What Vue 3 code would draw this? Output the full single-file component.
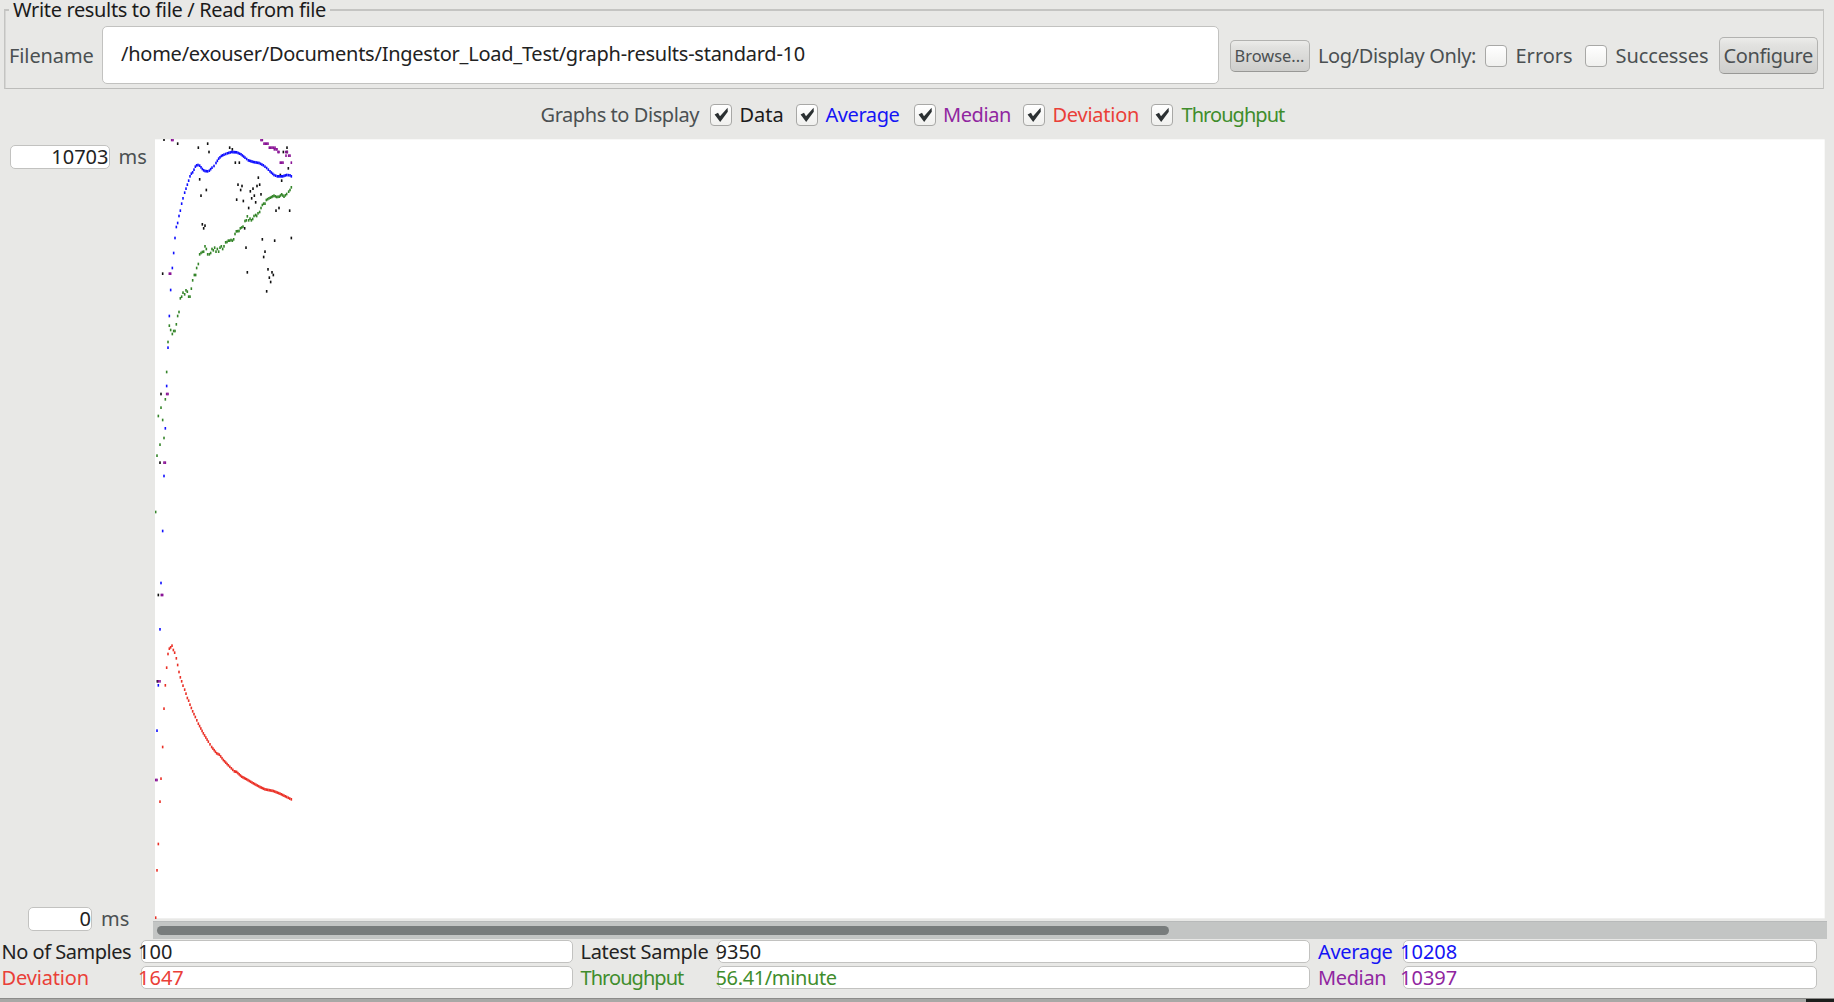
<script setup>
const GRAPHS = [
  { label: 'Data', color: '#1b1b1b', text: 8, ls: 0, width: 86 },
  { label: 'Average', color: '#1414f5', text: 8, ls: -0.43, width: 118 },
  { label: 'Median', color: '#9026a0', text: 7.5, ls: -0.42, width: 109.5 },
  { label: 'Deviation', color: '#ea4038', text: 7.5, ls: -0.25, width: 128 },
  { label: 'Throughput', color: '#3f8d2c', text: 8.5, ls: -0.95, width: 140 },
]

// Plot coordinates are in thirds of a pixel; samples are one STEP apart.
const STEP = 4.11

function curve(points) {
  const out = []
  for (let i = 0; i < points.length - 1; i++) {
    const [x0, y0] = points[i]
    const [x1, y1] = points[i + 1]
    const n = Math.max(1, Math.round((x1 - x0) / STEP))
    for (let k = 0; k < n; k++) {
      out.push([x0 + ((x1 - x0) * k) / n, y0 + ((y1 - y0) * k) / n])
    }
  }
  out.push(points[points.length - 1])
  return out
}

const series = [
  {
    color: '#111',
    dots: [
      [72, 29], [113, 41], [175, 53], [203, 41], [207, 66], [269, 53], [277, 58], [286, 98], [298, 98],
      [179, 148], [199, 180], [183, 197], [294, 164], [306, 168], [302, 180], [290, 209], [310, 213],
      [355, 143], [351, 168], [359, 164], [339, 176], [331, 184], [363, 193], [343, 197], [335, 205],
      [347, 217], [326, 234], [187, 283], [195, 287], [191, 295], [314, 295], [441, 53], [430, 66],
      [441, 66], [445, 115], [421, 135], [425, 152], [417, 234], [408, 242], [449, 242], [454, 324],
      [367, 328], [404, 332], [318, 353], [375, 365], [371, 381], [322, 427], [384, 418], [396, 427],
      [400, 435], [388, 443], [392, 456], [380, 484], [68, 431], [63, 792], [60, 998], [55, 1395],
      [52, 1654],
    ],
  },
  {
    color: '#8a1496',
    dots: [
      [95, 30], [99, 30], [363, 30], [367, 30], [372, 41], [376, 41], [380, 41], [384, 41], [388, 53],
      [392, 53], [396, 53], [400, 53], [405, 53], [403, 58], [408, 58], [411, 58], [414, 66], [417, 66],
      [421, 98], [425, 98], [429, 98], [437, 66], [442, 66], [438, 77], [446, 77], [450, 77], [454, 98],
      [88, 431], [92, 431], [80, 792], [84, 792], [72, 998], [76, 998], [64, 1395], [68, 1395],
      [55, 1654], [60, 1654], [47, 1950], [51, 1950],
    ],
  },
  {
    color: '#35852a',
    dots: [
      [47, 1146], [51, 977], [55, 858], [60, 944], [63, 833], [68, 870], [72, 924], [76, 808], [80, 726],
      [84, 636], [88, 587], [92, 600], [97, 612], [101, 603], [105, 603], [109, 583], [113, 558],
      [117, 546], [121, 505], [125, 500], [129, 488], [134, 493], [138, 481], [142, 485], [146, 500],
      [150, 500], [154, 476], [158, 451], [163, 435], [167, 435], [170, 414], [175, 402],
      ...curve([
        [179, 373], [183, 369], [187, 366], [191, 365], [195, 349], [199, 357], [203, 373], [208, 373],
        [212, 369], [216, 357], [220, 361], [224, 353], [228, 365], [232, 357], [236, 365], [240, 353],
        [244, 349], [248, 357], [252, 349], [257, 337], [261, 336], [265, 332], [269, 332], [273, 330],
        [277, 332], [281, 328], [285, 312], [289, 304], [297, 303], [301, 295], [309, 290], [315, 273],
        [319, 271], [322, 259], [326, 271], [330, 266], [334, 271], [338, 267], [342, 258], [347, 255],
        [350, 258], [354, 250], [359, 246], [363, 234], [367, 225], [371, 221], [375, 221], [379, 210],
        [387, 205], [395, 201], [402, 197], [410, 201], [418, 200], [425, 193], [432, 200], [440, 192],
        [446, 185], [450, 180], [454, 172],
      ]),
    ],
  },
  {
    color: '#1010ff',
    dots: [
      [51, 1802], [55, 1666], [60, 1498], [63, 1359], [68, 1203], [72, 1038], [76, 895], [80, 768],
      [84, 653], [88, 558], [92, 480], [97, 414], [101, 369], [105, 324],
      ...curve([
        [109, 291], [113, 279], [117, 258], [121, 242], [125, 221], [129, 205], [134, 188], [138, 176],
        [142, 164], [146, 152], [150, 139], [154, 131], [158, 127], [162, 119], [166, 110], [170, 106],
        [174, 105], [179, 107], [183, 112], [187, 117], [191, 121], [195, 123], [203, 124], [208, 122],
        [216, 113], [222, 108], [228, 99], [236, 86], [244, 78], [252, 74], [262, 70], [275, 66],
        [290, 67], [303, 73], [315, 83], [325, 91], [340, 96], [357, 99], [370, 106], [380, 114],
        [390, 124], [402, 135], [412, 139], [428, 139], [440, 135], [450, 136], [454, 139],
      ]),
    ],
  },
  {
    color: '#ea3026',
    dots: [
      [47, 2363], [51, 2221], [55, 2142], [60, 2015], [63, 1946], [68, 1851], [72, 1736], [76, 1666],
      [80, 1613], [84, 1572], [88, 1556], [92, 1552], [96, 1547], [100, 1560], [104, 1568], [109, 1585],
      ...curve([
        [113, 1605], [117, 1626], [121, 1642], [125, 1654], [129, 1667], [134, 1679], [138, 1691],
        [142, 1704], [146, 1712], [150, 1724], [158, 1744], [166, 1761], [175, 1781], [190, 1810],
        [205, 1835], [215, 1851], [230, 1870], [238, 1874], [250, 1890], [265, 1906], [283, 1924],
        [290, 1926], [305, 1940], [320, 1948], [340, 1960], [360, 1971], [375, 1978], [400, 1983],
        [420, 1991], [440, 2001], [454, 2008],
      ]),
    ],
  },
]

const stats = [
  { label: 'No of Samples', value: '100', color: '#222', ls: -0.48, vls: 0 },
  { label: 'Latest Sample', value: '9350', color: '#222', ls: -0.3, vls: 0 },
  { label: 'Average', value: '10208', color: '#1414f5', ls: -0.33, vls: 0 },
  { label: 'Deviation', value: '1647', color: '#ea4038', ls: -0.15, vls: 0 },
  { label: 'Throughput', value: '56.41/minute', color: '#3f8d2c', ls: -0.95, vls: -0.37 },
  { label: 'Median', value: '10397', color: '#9026a0', ls: -0.37, vls: 0 },
]
</script>

<template>
  <div class="app">
    <section class="file-panel">
      <div class="legend">
        <span class="rule short"></span>
        <span class="title">Write results to file / Read from file</span>
        <span class="rule"></span>
      </div>
      <div class="file-row">
        <span class="filename-label">Filename</span>
        <div class="path">/home/exouser/Documents/Ingestor_Load_Test/graph-results-standard-10</div>
        <button class="btn browse">Browse...</button>
        <span class="only">Log/Display Only:</span>
        <i class="check"></i>
        <span class="errors">Errors</span>
        <i class="check"></i>
        <span class="successes">Successes</span>
        <button class="btn configure">Configure</button>
      </div>
    </section>

    <section class="graph-row">
      <span class="graphs-label">Graphs to Display</span>
      <div v-for="g in GRAPHS" :key="g.label" class="toggle" :style="{ width: g.width + 'px' }">
        <i class="check">
          <svg viewBox="0 0 22 22" width="22" height="22">
            <path d="M4.6 10.4 L8 8.8 L10 12.2 L17.6 3.8 L17.8 7.8 L10.2 18 Z" fill="#2b3032" />
          </svg>
        </i>
        <span :style="{ color: g.color, marginLeft: g.text + 'px', letterSpacing: g.ls + 'px' }">{{ g.label }}</span>
      </div>
    </section>

    <section class="plot-row">
      <div class="axis">
        <div class="axis-line"><div class="field max">10703</div><span>ms</span></div>
        <div class="axis-line bottom"><div class="field min">0</div><span>ms</span></div>
      </div>
      <div class="plot">
        <svg class="canvas" viewBox="45 27 5008.5 2340" width="1669.5" height="780">
          <rect x="45" y="28" width="5009" height="2337" fill="#fff" />
          <g v-for="s in series" :key="s.color" :fill="s.color">
            <rect v-for="(d, i) in s.dots" :key="i" :x="d[0] - 2.4" :y="d[1] - 4" width="4.8" height="8" />
          </g>
        </svg>
        <div class="track"><div class="thumb"></div></div>
      </div>
    </section>

    <section class="stats">
      <template v-for="s in stats" :key="s.label">
        <span class="stat-label" :style="{ color: s.color, letterSpacing: s.ls + 'px' }">{{ s.label }}</span>
        <div class="stat-field">
          <span :style="{ color: s.color, letterSpacing: s.vls + 'px' }">{{ s.value }}</span>
        </div>
      </template>
    </section>

    <footer class="edge"><div class="corner"></div></footer>
  </div>
</template>

<style>
html,
body {
  margin: 0;
  background: #e8e8e6;
  overflow: hidden;
}
</style>

<style scoped>
.app {
  box-sizing: border-box;
  width: 1834px;
  height: 1002px;
  display: flex;
  flex-direction: column;
  overflow: hidden;
  background: #e8e8e6;
  color: #4b5052;
  font-family: "Noto Sans", "Open Sans", sans-serif;
  font-size: 20px;
  line-height: 24px;
  white-space: nowrap;
}
.app > * {
  flex: none;
}
.file-panel {
  box-sizing: border-box;
  width: 1820px;
  height: 89px;
  margin-left: 4px;
  background:
    linear-gradient(#c4c4c2, #c4c4c2) left 10px / 1.5px 79px no-repeat,
    linear-gradient(#c4c4c2, #c4c4c2) right 10px / 1.5px 79px no-repeat,
    linear-gradient(#bcbcba, #bcbcba) left bottom / 100% 1.5px no-repeat;
}
.legend {
  display: flex;
  align-items: center;
  height: 20px;
}
.rule {
  flex: 1;
  height: 1.5px;
  background: #c4c4c2;
  margin-left: 4px;
}
.rule.short {
  flex: none;
  width: 5px;
  margin-left: 0;
}
.title {
  margin-left: 4px;
  color: #1b1b1b;
  letter-spacing: -0.35px;
  line-height: 20px;
}
.file-row {
  display: flex;
  align-items: center;
  height: 69px;
}
.filename-label {
  width: 94px;
  margin-left: 5px;
  letter-spacing: -0.1px;
  padding-top: 3px;
}
.path {
  box-sizing: border-box;
  width: 1117px;
  height: 58px;
  border: 1.5px solid #c2c2c0;
  border-radius: 5px;
  background: #fff;
  color: #222;
  line-height: 54px;
  padding-left: 18px;
  letter-spacing: -0.25px;
  flex: none;
  margin-left: -1px;
}
.btn {
  box-sizing: border-box;
  flex: none;
  padding: 0;
  border: 1.5px solid #b2b2b0;
  border-bottom-color: #989896;
  border-radius: 5px;
  background: linear-gradient(#ececea, #e2e2e0 20%, #cececc);
  color: #4b5052;
  font-family: inherit;
  text-align: center;
}
.browse {
  width: 80px;
  height: 32px;
  margin-left: 10.5px;
  margin-top: 2px;
  font-size: 16.4px;
  line-height: 29px;
}
.only {
  width: 167px;
  margin-left: 8.5px;
  letter-spacing: -0.38px;
  padding-top: 3px;
  flex: none;
}
.check {
  box-sizing: border-box;
  flex: none;
  width: 22px;
  height: 22px;
  border: 1.5px solid #a8a8a6;
  border-radius: 4px;
  background: linear-gradient(#fff, #f0f0ee);
  display: block;
}
.file-row .check {
  margin-top: 3px;
}
.check svg {
  display: block;
  margin: -1px;
}
.errors,
.successes {
  padding-top: 3px;
  flex: none;
  margin-left: 8.5px;
}
.errors {
  width: 69.5px;
}
.successes {
  width: 103px;
  letter-spacing: -0.1px;
}
.configure {
  width: 99.5px;
  height: 37px;
  margin-top: 2px;
  font-size: 20px;
  line-height: 32px;
  letter-spacing: -0.4px;
}
.graph-row {
  display: flex;
  align-items: center;
  height: 50px;
  padding: 2px 0 0 540.5px;
  box-sizing: border-box;
}
.graphs-label {
  width: 169px;
  letter-spacing: -0.43px;
}
.toggle {
  display: flex;
  align-items: center;
  flex: none;
}
.plot-row {
  display: flex;
  height: 800px;
}
.axis {
  width: 152.5px;
  display: flex;
  flex-direction: column;
  justify-content: space-between;
  box-sizing: border-box;
  padding: 6px 0 8px;
}
.axis-line {
  display: flex;
  align-items: center;
  gap: 9px;
  padding-left: 10px;
}
.axis-line.bottom {
  padding-left: 27.5px;
}
.field {
  box-sizing: border-box;
  height: 24px;
  border: 1.5px solid #c2c2c0;
  border-radius: 5px;
  background: #fff;
  color: #222;
  text-align: right;
  line-height: 21px;
}
.max {
  width: 99.5px;
}
.min {
  width: 64.5px;
}
.plot {
  width: 1674.5px;
}
.canvas {
  display: block;
  margin: 0 0 2px 2.5px;
}
.track {
  height: 18px;
  background: #c3c5c4;
  box-sizing: border-box;
  padding: 4px 0 0 4px;
  border-top: 1px solid #b8baba;
}
.thumb {
  width: 1012.5px;
  height: 8.5px;
  border-radius: 4.5px;
  background: #787c7c;
}
.stats {
  display: grid;
  grid-template-columns: 139px 432px 145.5px 592px 92.5px 414px;
  grid-auto-rows: 23px;
  row-gap: 3px;
  padding: 1px 0 0 1.5px;
  height: 59px;
  box-sizing: border-box;
}
.stat-label {
  line-height: 24px;
  padding-left: 8px;
}
.stat-label:nth-child(6n + 1) {
  padding-left: 0;
}
.stat-field {
  box-sizing: border-box;
  border: 1.5px solid #c2c2c0;
  border-radius: 5px;
  background: #fff;
  line-height: 22px;
}
.stat-field span {
  margin-left: -3.5px;
}
.edge {
  box-sizing: border-box;
  height: 4px;
  border-top: 1px solid #8c8c8a;
  background: #a8a8a6;
  display: flex;
  justify-content: flex-end;
}
.corner {
  width: 28px;
  height: 3px;
  background: #1c1e1c;
}
</style>
